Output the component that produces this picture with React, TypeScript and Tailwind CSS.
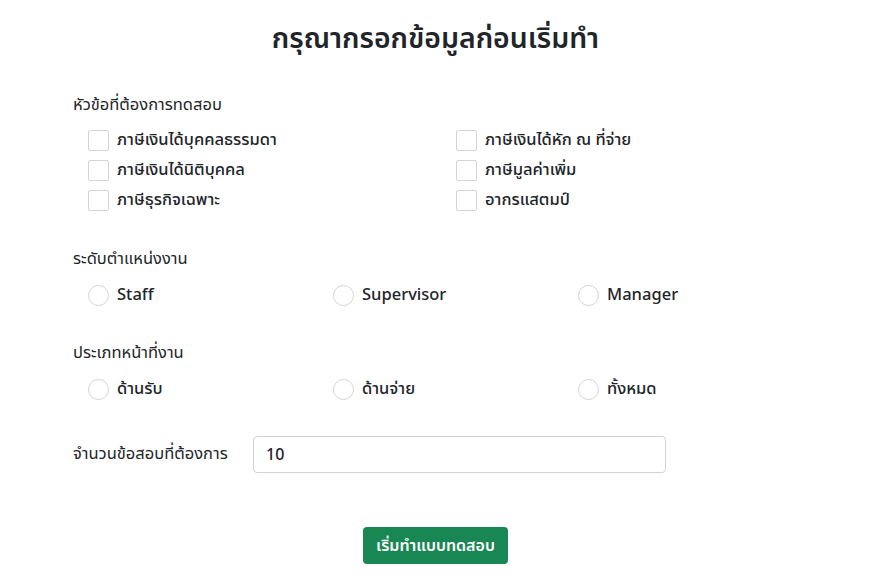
import { useState } from "react";

const topics = [
  "ภาษีเงินได้บุคคลธรรมดา",
  "ภาษีเงินได้หัก ณ ที่จ่าย",
  "ภาษีเงินได้นิติบุคคล",
  "ภาษีมูลค่าเพิ่ม",
  "ภาษีธุรกิจเฉพาะ",
  "อากรแสตมป์",
];

const levels = ["Staff", "Supervisor", "Manager"];
const duties = ["ด้านรับ", "ด้านจ่าย", "ทั้งหมด"];

function Radio({ label, name }: { label: string; name: string }) {
  return (
    <label className="flex items-center gap-[8px] h-[30px] cursor-pointer">
      <input
        type="radio"
        name={name}
        className="appearance-none w-[21px] h-[21px] rounded-full border border-[#d4d4d4] bg-white checked:border-[#198754] checked:border-[6px]"
      />
      <span className="text-[16.5px] font-medium text-[#212529]">{label}</span>
    </label>
  );
}

export default function App() {
  const [count, setCount] = useState("10");

  return (
    <div
      className="min-h-screen bg-white text-[#212529]"
      style={{ fontFamily: '"Noto Sans Thai", "Noto Sans", Lato, sans-serif' }}
    >
      <main className="ml-[73px] w-[725px] pt-[21px] pb-6">
        <h1 className="text-center text-[28.4px] font-semibold leading-[38px]">
          กรุณากรอกข้อมูลก่อนเริ่มทำ
        </h1>

        {/* Topics */}
        <section className="mt-[34px]">
          <h3 className="text-[16.5px] leading-[24px]">หัวข้อที่ต้องการทดสอบ</h3>
          <div className="grid grid-cols-[368px_1fr] pl-[15px] mt-[8px]">
            {topics.map((t) => (
              <label key={t} className="flex items-center gap-[8px] h-[30px] cursor-pointer">
                <input
                  type="checkbox"
                  className="appearance-none w-[21px] h-[21px] rounded-[2px] border border-[#d4d4d4] bg-white checked:bg-[#198754] checked:border-[#198754]"
                />
                <span className="text-[16.5px] font-medium">{t}</span>
              </label>
            ))}
          </div>
        </section>

        {/* Level */}
        <section className="mt-[32px]">
          <h3 className="text-[16.5px] leading-[24px]">ระดับตำแหน่งงาน</h3>
          <div className="grid grid-cols-[245px_245px_1fr] pl-[15px] mt-[9px]">
            {levels.map((l) => (
              <Radio key={l} label={l} name="level" />
            ))}
          </div>
        </section>

        {/* Duty */}
        <section className="mt-[31px]">
          <h3 className="text-[16.5px] leading-[24px]">ประเภทหน้าที่งาน</h3>
          <div className="grid grid-cols-[245px_245px_1fr] pl-[15px] mt-[9px]">
            {duties.map((d) => (
              <Radio key={d} label={d} name="duty" />
            ))}
          </div>
        </section>

        {/* Count */}
        <section className="mt-[32px] flex items-center">
          <label className="w-[180px] text-[16.5px]">จำนวนข้อสอบที่ต้องการ</label>
          <input
            type="text"
            value={count}
            onChange={(e) => setCount(e.target.value)}
            className="w-[413px] h-[37px] px-[12px] rounded-[4px] border border-[#ced4da] text-[16px] font-medium outline-none"
          />
        </section>

        <div className="flex justify-center mt-[54px]">
          <button className="h-[37px] w-[145px] rounded-[4px] bg-[#198754] text-white text-[16px] font-semibold">
            เริ่มทำแบบทดสอบ
          </button>
        </div>
      </main>
    </div>
  );
}
